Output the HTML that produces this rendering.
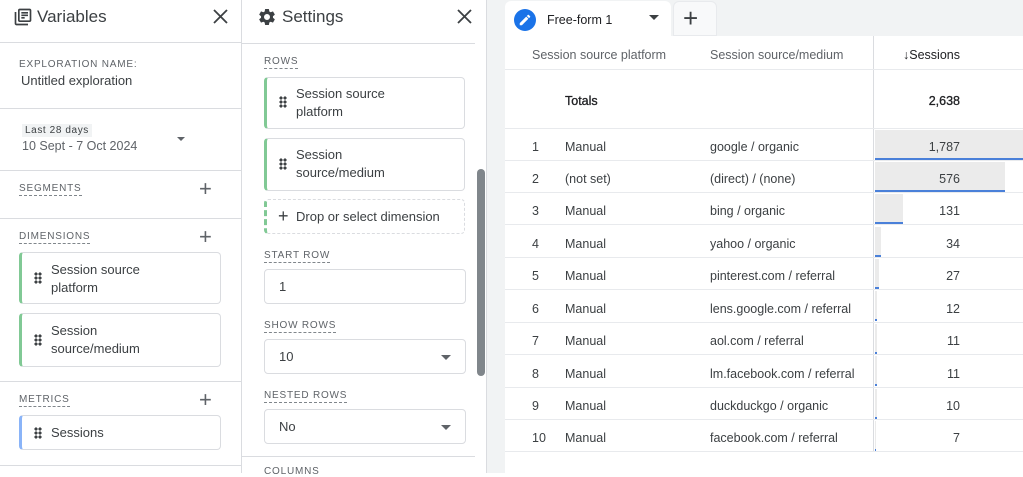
<!DOCTYPE html>
<html><head><style>
*{box-sizing:border-box;margin:0;padding:0}
body{width:1023px;height:473px;overflow:hidden;font-family:"Liberation Sans",Arial,sans-serif;color:#202124;background:#fff;position:relative}
.a{position:absolute}
.lbl{font-size:10px;letter-spacing:.8px;color:#5f6368;border-bottom:1px dashed #80868b;padding-bottom:1px}
.card{position:absolute;border:1px solid #dadce0;border-radius:4px;background:#fff;font-size:13px;color:#3c4043;line-height:18px}
.grip{position:absolute;width:8px;height:12px;background-image:radial-gradient(circle,#3c4043 1.5px,transparent 1.7px);background-size:4px 4px}
.hl{position:absolute;height:1px;background:#dadce0}
.plus{position:absolute;font-size:22px;color:#5f6368;font-weight:300;line-height:1}
.row{position:absolute;left:505px;width:518px;height:32px;border-bottom:1px solid #e8eaed;font-size:12.5px;color:#3c4043}
.row span{position:absolute;top:11px}
.row span.n{right:63px;text-align:right}
.bar{position:absolute;left:875px;height:30px;background:#ebebeb;border-bottom:2px solid #4a80d9}
</style></head><body>
<!-- left panel -->
<div class="a" style="left:241px;top:0;width:1px;height:473px;background:#dadce0"></div>
<svg class="a" style="left:13px;top:7px" width="20" height="20" viewBox="0 0 24 24"><path fill="#3c4043" d="M4 6H2v14c0 1.1.9 2 2 2h14v-2H4V6zm16-4H8c-1.1 0-2 .9-2 2v12c0 1.1.9 2 2 2h12c1.1 0 2-.9 2-2V4c0-1.1-.9-2-2-2zm0 14H8V4h12v12zM10 9h8v2h-8zm0 3h4v2h-4zm0-6h8v2h-8z"/></svg>
<div class="a" style="left:37px;top:7px;font-size:17px;color:#3c4043">Variables</div>
<svg class="a" style="left:213px;top:9px" width="15" height="15" viewBox="0 0 15 15"><path d="M1 1L14 14M14 1L1 14" stroke="#3c4043" stroke-width="1.8"/></svg>
<div class="hl" style="left:0;top:42px;width:241px"></div>
<div class="a" style="left:19px;top:59px;font-size:10px;letter-spacing:.8px;color:#5f6368">EXPLORATION NAME:</div>
<div class="a" style="left:21px;top:73px;font-size:13px;color:#3c4043">Untitled exploration</div>
<div class="hl" style="left:0;top:108px;width:241px"></div>
<div class="a" style="left:22px;top:124px;font-size:10px;letter-spacing:.6px;color:#3c4043;background:#f1f3f4;padding:1px 3px">Last 28 days</div>
<div class="a" style="left:22px;top:139px;font-size:12.5px;color:#5f6368">10 Sept - 7 Oct 2024</div>
<div class="a" style="left:177px;top:137px;border:4px solid transparent;border-top:4px solid #5f6368"></div>
<div class="hl" style="left:0;top:170px;width:241px"></div>
<div class="a lbl" style="left:19px;top:183px">SEGMENTS</div>
<div class="plus" style="left:199px;top:178px">+</div>
<div class="hl" style="left:0;top:218px;width:241px"></div>
<div class="a lbl" style="left:19px;top:231px">DIMENSIONS</div>
<div class="plus" style="left:199px;top:226px">+</div>
<div class="card" style="left:19px;top:252px;width:202px;height:52px;border-left:3px solid #81c995"><div class="grip" style="left:12px;top:19px"></div><div class="a" style="left:29px;top:8px">Session source<br>platform</div></div>
<div class="card" style="left:19px;top:313px;width:202px;height:54px;border-left:3px solid #81c995"><div class="grip" style="left:12px;top:20px"></div><div class="a" style="left:29px;top:8px">Session<br>source/medium</div></div>
<div class="hl" style="left:0;top:381px;width:241px"></div>
<div class="a lbl" style="left:19px;top:394px">METRICS</div>
<div class="plus" style="left:199px;top:389px">+</div>
<div class="card" style="left:19px;top:415px;width:202px;height:35px;border-left:3px solid #8ab4f8"><div class="grip" style="left:12px;top:11px"></div><div class="a" style="left:29px;top:8px">Sessions</div></div>
<div class="hl" style="left:0;top:465px;width:241px"></div>
<!-- settings -->
<div class="a" style="left:486px;top:0;width:1px;height:473px;background:#dadce0"></div>
<svg class="a" style="left:257px;top:7px" width="20" height="20" viewBox="0 0 24 24"><path fill="#3c4043" d="M19.14 12.94c.04-.3.06-.61.06-.94 0-.32-.02-.64-.07-.94l2.03-1.58a.49.49 0 0 0 .12-.61l-1.920-3.32a.49.49 0 0 0-.59-.22l-2.39.96c-.5-.38-1.03-.7-1.62-.94l-.36-2.54a.48.48 0 0 0-.48-.41h-3.84c-.24 0-.43.17-.47.41l-.36 2.54c-.59.24-1.130.57-1.62.94l-2.39-.96c-.22-.08-.47 0-.59.22L2.74 8.87c-.12.21-.08.47.12.61l2.03 1.58c-.05.3-.09.63-.09.94s.02.64.07.94l-2.03 1.58a.49.49 0 0 0-.12.61l1.92 3.32c.12.22.37.29.59.22l2.39-.96c.5.38 1.03.7 1.62.94l.36 2.54c.05.24.24.41.48.41h3.84c.24 0 .44-.17.47-.41l.36-2.54c.59-.24 1.13-.56 1.62-.94l2.39.96c.22.08.47 0 .59-.22l1.92-3.32c.12-.22.07-.47-.12-.61l-2.01-1.58zM12 15.6A3.6 3.6 0 1 1 12 8.4a3.6 3.6 0 0 1 0 7.2z"/></svg>
<div class="a" style="left:282px;top:7px;font-size:17px;color:#3c4043">Settings</div>
<svg class="a" style="left:457px;top:9px" width="15" height="15" viewBox="0 0 15 15"><path d="M1 1L14 14M14 1L1 14" stroke="#3c4043" stroke-width="1.8"/></svg>
<div class="hl" style="left:242px;top:43px;width:233px"></div>
<div class="a lbl" style="left:264px;top:56px">ROWS</div>
<div class="card" style="left:264px;top:77px;width:201px;height:52px;border-left:3px solid #81c995"><div class="grip" style="left:12px;top:18px"></div><div class="a" style="left:29px;top:7px">Session source<br>platform</div></div>
<div class="card" style="left:264px;top:138px;width:201px;height:53px;border-left:3px solid #81c995"><div class="grip" style="left:12px;top:19px"></div><div class="a" style="left:29px;top:7px">Session<br>source/medium</div></div>
<div class="card" style="left:264px;top:199px;width:201px;height:35px;border:1px dashed #dadce0;border-left:3px dashed #81c995"><div class="a" style="left:11px;top:7px;font-size:18px;color:#3c4043;line-height:18px">+</div><div class="a" style="left:29px;top:8px">Drop or select dimension</div></div>
<div class="a lbl" style="left:264px;top:250px">START ROW</div>
<div class="card" style="left:264px;top:269px;width:202px;height:35px"><div class="a" style="left:14px;top:8px">1</div></div>
<div class="a lbl" style="left:264px;top:320px">SHOW ROWS</div>
<div class="card" style="left:264px;top:339px;width:202px;height:35px"><div class="a" style="left:14px;top:8px">10</div><div class="a" style="left:176px;top:15px;border:5px solid transparent;border-top:5px solid #5f6368"></div></div>
<div class="a lbl" style="left:264px;top:390px">NESTED ROWS</div>
<div class="card" style="left:264px;top:409px;width:202px;height:35px"><div class="a" style="left:14px;top:8px">No</div><div class="a" style="left:176px;top:15px;border:5px solid transparent;border-top:5px solid #5f6368"></div></div>
<div class="hl" style="left:242px;top:456px;width:233px"></div>
<div class="a" style="left:264px;top:466px;font-size:10px;letter-spacing:.8px;color:#5f6368">COLUMNS</div>
<div class="a" style="left:477px;top:169px;width:8px;height:207px;border-radius:4px;background:#80868b"></div>
<!-- right area -->
<div class="a" style="left:487px;top:0;width:536px;height:473px;background:#f1f3f4"></div>
<div class="a" style="left:505px;top:36px;width:518px;height:437px;background:#fff"></div>
<div class="a" style="left:505px;top:1px;width:166px;height:36px;background:#fff;border-radius:6px 6px 0 0"></div>
<div class="a" style="left:514px;top:9px;width:22px;height:22px;border-radius:50%;background:#1a73e8"></div>
<svg class="a" style="left:518px;top:13px" width="14" height="14" viewBox="0 0 24 24"><path fill="#fff" d="M3 17.25V21h3.75L17.81 9.94l-3.75-3.75L3 17.25zM20.71 7.04a1 1 0 0 0 0-1.41l-2.34-2.34a1 1 0 0 0-1.41 0l-1.83 1.83 3.75 3.75 1.83-1.83z"/></svg>
<div class="a" style="left:547px;top:13px;font-size:12.5px;color:#202124">Free-form 1</div>
<div class="a" style="left:649px;top:15px;border:5px solid transparent;border-top:5px solid #3c4043"></div>
<div class="a" style="left:673px;top:1px;width:44px;height:35px;background:#f8f9fa;border-radius:6px 6px 0 0;border:1px solid #e8eaed"></div>
<div class="a" style="left:683px;top:3px;font-size:26px;color:#3c4043;font-weight:300">+</div>
<div class="a" style="left:873px;top:36px;width:1px;height:416px;background:#dadce0"></div>
<div class="row" style="top:37px;height:33px"><span style="left:27px;top:11px;color:#5f6368">Session source platform</span><span style="left:205px;top:11px;color:#5f6368">Session source/medium</span><span class="n" style="top:11px;color:#202124">↓Sessions</span></div>
<div class="row" style="top:70px;height:59px"><span style="left:60px;top:24px;color:#202124;-webkit-text-stroke:.3px #202124">Totals</span><span class="n" style="top:24px;color:#202124;-webkit-text-stroke:.3px #202124">2,638</span></div>
<div class="bar" style="top:130px;width:148px"></div>
<div class="bar" style="top:162px;width:130px"></div>
<div class="bar" style="top:194px;width:28px"></div>
<div class="bar" style="top:227px;width:6px"></div>
<div class="bar" style="top:259px;width:4px"></div>
<div class="bar" style="top:291px;width:2px"></div>
<div class="bar" style="top:324px;width:2px"></div>
<div class="bar" style="top:356px;width:2px"></div>
<div class="bar" style="top:389px;width:2px"></div>
<div class="bar" style="top:421px;width:1px"></div>
<div class="row" style="top:129px"><span style="left:27px">1</span><span style="left:60px">Manual</span><span style="left:205px">google / organic</span><span class="n">1,787</span></div>
<div class="row" style="top:161px"><span style="left:27px">2</span><span style="left:60px">(not set)</span><span style="left:205px">(direct) / (none)</span><span class="n">576</span></div>
<div class="row" style="top:193px"><span style="left:27px">3</span><span style="left:60px">Manual</span><span style="left:205px">bing / organic</span><span class="n">131</span></div>
<div class="row" style="top:226px"><span style="left:27px">4</span><span style="left:60px">Manual</span><span style="left:205px">yahoo / organic</span><span class="n">34</span></div>
<div class="row" style="top:258px"><span style="left:27px">5</span><span style="left:60px">Manual</span><span style="left:205px">pinterest.com / referral</span><span class="n">27</span></div>
<div class="row" style="top:291px"><span style="left:27px">6</span><span style="left:60px">Manual</span><span style="left:205px">lens.google.com / referral</span><span class="n">12</span></div>
<div class="row" style="top:323px"><span style="left:27px">7</span><span style="left:60px">Manual</span><span style="left:205px">aol.com / referral</span><span class="n">11</span></div>
<div class="row" style="top:356px"><span style="left:27px">8</span><span style="left:60px">Manual</span><span style="left:205px">lm.facebook.com / referral</span><span class="n">11</span></div>
<div class="row" style="top:388px"><span style="left:27px">9</span><span style="left:60px">Manual</span><span style="left:205px">duckduckgo / organic</span><span class="n">10</span></div>
<div class="row" style="top:420px"><span style="left:27px">10</span><span style="left:60px">Manual</span><span style="left:205px">facebook.com / referral</span><span class="n">7</span></div>
</body></html>
